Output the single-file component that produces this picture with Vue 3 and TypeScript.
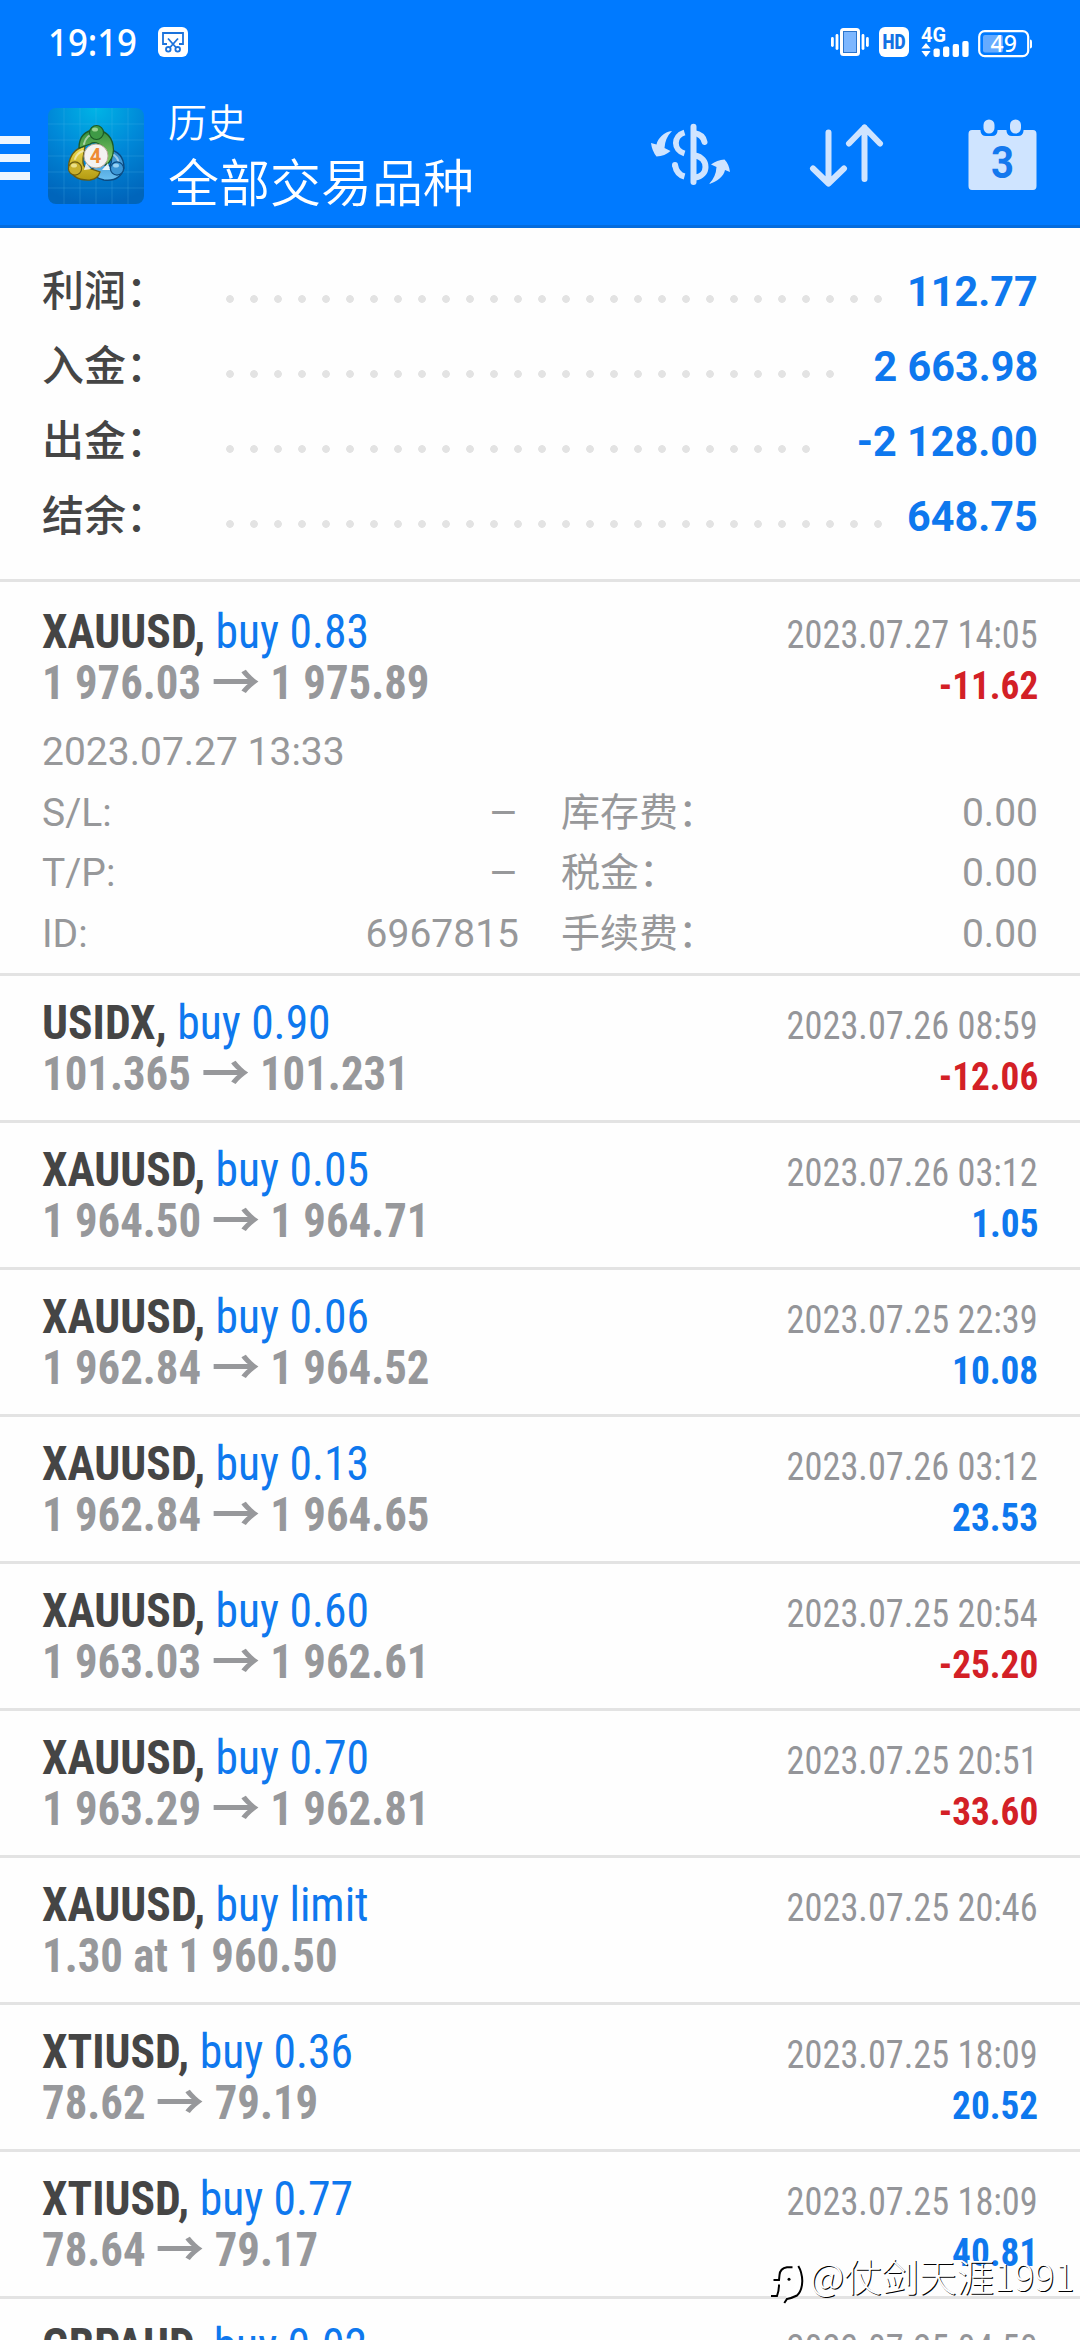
<script setup lang="ts">
interface SummaryRow { label: string; value: string; dots: number }
interface Deal { symbol: string; side: string; from: string; to?: string; time: string; profit?: string }

const summary: SummaryRow[] = [
  { label: '利润：', value: '112.77', dots: 28 },
  { label: '入金：', value: '2 663.98', dots: 26 },
  { label: '出金：', value: '-2 128.00', dots: 25 },
  { label: '结余：', value: '648.75', dots: 28 },
]

const details = [
  ['S/L:', '–', '库存费：', '0.00'],
  ['T/P:', '–', '税金：', '0.00'],
  ['ID:', '6967815', '手续费：', '0.00'],
]

const deals: Deal[] = [
  { symbol: 'XAUUSD', side: 'buy 0.83', from: '1 976.03', to: '1 975.89', time: '2023.07.27 14:05', profit: '-11.62' },
  { symbol: 'USIDX', side: 'buy 0.90', from: '101.365', to: '101.231', time: '2023.07.26 08:59', profit: '-12.06' },
  { symbol: 'XAUUSD', side: 'buy 0.05', from: '1 964.50', to: '1 964.71', time: '2023.07.26 03:12', profit: '1.05' },
  { symbol: 'XAUUSD', side: 'buy 0.06', from: '1 962.84', to: '1 964.52', time: '2023.07.25 22:39', profit: '10.08' },
  { symbol: 'XAUUSD', side: 'buy 0.13', from: '1 962.84', to: '1 964.65', time: '2023.07.26 03:12', profit: '23.53' },
  { symbol: 'XAUUSD', side: 'buy 0.60', from: '1 963.03', to: '1 962.61', time: '2023.07.25 20:54', profit: '-25.20' },
  { symbol: 'XAUUSD', side: 'buy 0.70', from: '1 963.29', to: '1 962.81', time: '2023.07.25 20:51', profit: '-33.60' },
  { symbol: 'XAUUSD', side: 'buy limit', from: '1.30 at 1 960.50', time: '2023.07.25 20:46' },
  { symbol: 'XTIUSD', side: 'buy 0.36', from: '78.62', to: '79.19', time: '2023.07.25 18:09', profit: '20.52' },
  { symbol: 'XTIUSD', side: 'buy 0.77', from: '78.64', to: '79.17', time: '2023.07.25 18:09', profit: '40.81' },
  { symbol: 'GBPAUD', side: 'buy 0.02', from: '', time: '2023.07.25 04:50' },
]
</script>

<template>
  <div class="screen">
    <header class="top">
      <div class="status">
        <span class="clock">19:19</span>
        <svg class="snip" width="30" height="30" viewBox="0 0 30 30">
          <rect width="30" height="30" rx="6" fill="#fff" />
          <g fill="none" stroke="#1a72dc" stroke-width="1.8">
            <path d="M9 17H5V6H25V17H21" />
            <path d="M10 11.5L18.5 21M20 11.5L11.5 21" />
            <circle cx="10.3" cy="22.3" r="2.3" />
            <circle cx="19.7" cy="22.3" r="2.3" />
          </g>
        </svg>
        <span class="spacer" />
        <svg width="38" height="30" viewBox="0 0 38 30">
          <g fill="#fff">
            <rect x="0" y="10" width="2.8" height="10" rx="1.4" />
            <rect x="4.6" y="7" width="2.8" height="16" rx="1.4" />
            <rect x="30.6" y="7" width="2.8" height="16" rx="1.4" />
            <rect x="35" y="10" width="2.8" height="10" rx="1.4" />
          </g>
          <rect x="10.5" y="2.5" width="17" height="25" rx="2" fill="#7db7ff" stroke="#fff" stroke-width="3" />
          <rect x="12.5" y="4.5" width="13" height="21" fill="none" stroke="#2b74cc" stroke-width="1" />
        </svg>
        <svg class="hd" width="30" height="30" viewBox="0 0 30 30">
          <rect width="30" height="30" rx="6" fill="#fff" />
          <text x="3.5" y="21.9" class="hdtxt" textLength="23" lengthAdjust="spacingAndGlyphs">HD</text>
        </svg>
        <svg class="sig" width="48" height="30" viewBox="0 0 48 30">
          <text x="0" y="14.5" class="g4" textLength="25" lengthAdjust="spacingAndGlyphs">4G</text>
          <g fill="#fff">
            <path d="M5 16L9.6 21.4H0.4ZM5 30L0.4 24H9.6Z" />
            <rect x="12.5" y="21.5" width="6.3" height="8.5" rx="2" />
            <rect x="22" y="19.5" width="6.3" height="10.5" rx="2" />
            <rect x="31.7" y="17" width="6.3" height="13" rx="2" />
            <rect x="41.3" y="14" width="6.3" height="16" rx="2" />
          </g>
        </svg>
        <svg class="batt" width="55" height="28" viewBox="0 0 55 28">
          <rect x="1.2" y="1.2" width="49" height="25" rx="5.5" fill="none" stroke="#fff" stroke-width="2.2" />
          <rect x="5" y="5" width="20" height="17.5" rx="2" fill="#66abff" />
          <path d="M52 9.5q2 0 2 2v5q0 2-2 2z" fill="#fff" />
          <text x="25.7" y="22" text-anchor="middle" class="pct">49</text>
        </svg>
      </div>
      <div class="bar">
        <div class="menu"><i /><i /><i /></div>
        <svg class="logo" width="96" height="96" viewBox="0 0 96 96">
          <defs>
            <radialGradient id="sky" cx=".5" cy="0" r="1"><stop offset="0" stop-color="#00b4e6" /><stop offset=".5" stop-color="#0088d8" /><stop offset="1" stop-color="#0065bb" /></radialGradient>
            <linearGradient id="gr" x2="0" y2="1"><stop offset="0" stop-color="#2f8c3c" /><stop offset="1" stop-color="#8fd06a" /></linearGradient>
            <linearGradient id="ye" x2="0" y2="1"><stop offset="0" stop-color="#f0dc50" /><stop offset="1" stop-color="#b39a10" /></linearGradient>
            <linearGradient id="bl" x2="0" y2="1"><stop offset="0" stop-color="#2e86c8" /><stop offset="1" stop-color="#6cc0f0" /></linearGradient>
          </defs>
          <rect width="96" height="96" rx="8" fill="url(#sky)" />
          <path d="M16 0V96M32 0V96M48 0V96M64 0V96M80 0V96M0 16H96M0 32H96M0 48H96M0 64H96M0 80H96" stroke="#5cc4f0" stroke-opacity=".22" stroke-width="1" />
          <path d="M60 41Q76 44 76 60Q72 74 56 72Q46 70 42 62L52 56L62 58Q66 50 60 41Z" fill="url(#bl)" stroke="#0b4a80" stroke-width="1.3" />
          <path d="M37 38Q22 42 20.5 58Q24 73 42 72Q50 71 52 64L40 60Q34 60 35 50Z" fill="url(#ye)" stroke="#6a5c10" stroke-width="1.3" />
          <path d="M31 40Q31 23 48 21.5Q65 24 65.5 42Q65 52 58 57L56 40Q48 32 42 36Z" fill="url(#gr)" stroke="#1c5a28" stroke-width="1.3" />
          <path d="M36 36Q38 27 46 26M27 51Q29 45 35 43M66 47Q71 51 71 57" fill="none" stroke="#fff" stroke-opacity=".5" stroke-width="2" stroke-linecap="round" />
          <path d="M36 62L38 55L43 61ZM54 62L60 55L62 62Z" fill="#fff" opacity=".85" />
          <circle cx="48.5" cy="24.5" r="7" fill="#3f9a46" stroke="#1c5a28" stroke-width="1.2" />
          <circle cx="27" cy="60.5" r="6.6" fill="#c9b02c" stroke="#6a5c10" stroke-width="1.2" />
          <circle cx="69" cy="60.5" r="6.6" fill="#3b96d6" stroke="#0b4a80" stroke-width="1.2" />
          <ellipse cx="47" cy="21.5" rx="3" ry="2" fill="#b4e0a4" opacity=".8" />
          <ellipse cx="26" cy="57.5" rx="3" ry="2" fill="#f4eca0" opacity=".8" />
          <ellipse cx="68" cy="57.5" rx="3" ry="2" fill="#b0e0fa" opacity=".8" />
          <circle cx="48" cy="48" r="12" fill="#f4f2f2" stroke="#b9a996" stroke-width="1" />
          <text x="47.5" y="55" text-anchor="middle" class="four">4</text>
        </svg>
        <div class="titles">
          <div class="t1">历史</div>
          <div class="t2">全部交易品种</div>
        </div>
        <svg class="usd" width="80" height="64" viewBox="0 0 80 64">
          <g fill="none" stroke="#cfe4ff">
            <path d="M42.5 4.7V60" stroke-width="6" stroke-linecap="round" />
            <path d="M33.5 10.5C22 14 22 28 33.5 31.5" stroke-width="5.8" />
            <path d="M43 11C49 12 52.5 14.5 53.5 20" stroke-width="6" stroke-linecap="round" />
            <path d="M44 33.5C58 36 58 54 44 55.5" stroke-width="6" />
            <path d="M24 43C25 49 28 53 33.5 54.5" stroke-width="6" />
          </g>
          <circle cx="24" cy="43" r="3" fill="#cfe4ff" />
          <path d="M21 9C13 10 7 16 5.5 22.5L0 21Q1 29 5.500 34.5Q14 34 19.500 29L13.500 26Q14 16 21 9Z" fill="#cfe4ff" />
          <path d="M58 62C66 60 73 54 74 48L79 50Q78 42 73.5 37.5Q66 38 60 42.5L65.5 45Q65 55 58 62Z" fill="#cfe4ff" />
        </svg>
        <svg class="sort" width="76" height="66" viewBox="0 0 76 66">
          <path d="M19.5 10.5V61M4 46.5L19.5 61.5L35 46.5M55.5 57V5.5M40 21.5L55.5 5.5L71 21.5" fill="none" stroke="#cfe4ff" stroke-width="6" stroke-linecap="round" stroke-linejoin="round" />
        </svg>
        <svg class="cal" width="70" height="72" viewBox="0 0 70 72">
          <path d="M4 11H12.5V12Q13 17 18 17H24Q29 17 29.5 12V11H38.5V12Q39 17 44 17H50Q55 17 55.5 12V11H65Q68.5 11 68.5 15V67Q68.5 71 65 71H4Q.5 71 .5 67V15Q.5 11 4 11Z" fill="#cfe4ff" />
          <rect x="15.5" y=".5" width="11" height="14" rx="5.5" fill="#cfe4ff" />
          <rect x="42" y=".5" width="11" height="14" rx="5.5" fill="#cfe4ff" />
          <text x="23" y="59" class="three" textLength="23" lengthAdjust="spacingAndGlyphs">3</text>
        </svg>
      </div>
    </header>

    <section class="summary">
      <div v-for="s in summary" :key="s.label" class="srow">
        <span class="slabel">{{ s.label }}</span>
        <span class="dots" :style="{ width: s.dots * 24 + 'px' }" />
        <span class="sval">{{ s.value }}</span>
      </div>
    </section>

    <section class="list">
      <article v-for="(d, i) in deals" :key="i" class="deal" :class="{ open: i === 0 }">
        <div class="line">
          <span class="name"><b>{{ d.symbol }},</b> <span class="side">{{ d.side }}</span></span>
          <span class="time">{{ d.time }}</span>
        </div>
        <div v-if="d.from" class="line">
          <span class="price">{{ d.from }}<template v-if="d.to">{{ ' ' }}<span class="arr">→</span> {{ d.to }}</template></span>
          <span v-if="d.profit" class="profit" :class="{ neg: d.profit.startsWith('-') }">{{ d.profit }}</span>
        </div>
        <div v-if="i === 0" class="details">
          <div class="drow">2023.07.27 13:33</div>
          <div v-for="r in details" :key="r[0]" class="drow">
            <span class="half"><span>{{ r[0] }}</span><span :class="{ dash: r[1] === '–' }">{{ r[1] }}</span></span>
            <span class="half"><span>{{ r[2] }}</span><span>{{ r[3] }}</span></span>
          </div>
        </div>
      </article>
    </section>

    <div class="mark">
      <svg width="38" height="46" viewBox="0 0 38 46">
        <path d="M4 34Q8 30 9 22M12 18Q13 9 22 9Q31 10 30.5 20Q30 32 18 35" fill="none" stroke="#fff" stroke-width="6" />
        <path d="M24.5 7.3H19Q12 8.5 11.5 15L11 20H5.5M11 24.5Q11 31 9 36H3M30.3 6Q34 12 34.3 21Q34 31 29 35.5Q24 38 19 39L16.3 43" fill="none" stroke="#000" stroke-width="2" />
        <circle cx="21" cy="19.3" r="1.5" fill="#000" />
      </svg>
      <span>@仗剑天涯1991</span>
    </div>
  </div>
</template>

<style>
body { background: #fff; }
</style>

<style scoped>
.screen { position: relative; width: 1080px; height: 2340px; overflow: hidden; background: #fefefe; font-family: Roboto, "Noto Sans CJK SC", sans-serif; color: #454545; }
.top { box-sizing: border-box; height: 228px; background: #007aff; border-bottom: 3px solid #046cdd; }
.status { display: flex; height: 84px; padding: 0 47px 0 48px; align-items: center; box-sizing: border-box; color: #fff; }
.clock { font: 500 38px/84px "Noto Sans", sans-serif; width: 90px; transform: scaleX(.915); transform-origin: left; margin-top: -2px; }
.snip { margin-left: 20px; }
.spacer { flex: 1; }
.hd { margin-left: 10px; }
.sig { margin-left: 12px; }
.batt { margin-left: 9px; margin-top: 3px; }
.hdtxt { font: 900 20px Roboto, sans-serif; fill: #1272e4; }
.g4 { font: 700 20px Roboto, sans-serif; fill: #fff; }
.pct { font: 500 23px "Noto Sans", sans-serif; fill: #fff; }
.bar { display: flex; height: 141px; align-items: flex-start; }
.menu { width: 30px; padding-top: 52px; display: flex; flex-direction: column; gap: 10px; }
.menu i { height: 8px; background: #eef6ff; }
.logo { margin: 24px 0 0 18px; }
.four { font: 700 20px Roboto, sans-serif; fill: #ee8a35; }
.titles { margin-left: 24px; width: 483px; padding-top: 12px; color: #fff; font-weight: 350; }
.t1 { font-size: 39px; line-height: 56px; }
.t2 { font-size: 51px; line-height: 66px; }
.usd { margin-top: 38px; }
.sort { margin: 38px 0 0 78px; }
.cal { margin: 35px 0 0 83px; }
.three { font: 700 44px Roboto, sans-serif; fill: #1478ee; }
.summary { height: 351px; box-sizing: border-box; padding: 26px 42px 0 42px; }
.srow { display: flex; height: 75px; align-items: center; font-size: 42px; line-height: 75px; }
.slabel { width: 184px; font-weight: 500; }
.dots { height: 8px; margin-top: 15px; background: radial-gradient(circle at 4px 4px, #e3e3e3 3.5px, transparent 4.2px) 0 0 / 24px 8px repeat-x; }
.sval { margin-left: auto; font-weight: 700; color: #0e78ee; transform: scaleX(.985); transform-origin: right; }
.deal { border-top: 3px solid #e3e3e3; padding: 21px 42px 0 42px; box-sizing: content-box; height: 123px; }
.deal.open { padding-top: 24px; height: 367px; }
.line { display: flex; justify-content: space-between; height: 51px; line-height: 51px; white-space: nowrap; align-items: baseline; font-stretch: 75%; font-family: "Roboto Condensed", Roboto, "Noto Sans CJK SC", sans-serif; }
.name { font-size: 48px; transform: scaleX(.949); transform-origin: left; }
.name b { font-weight: 700; }
.side { color: #0e78ee; }
.time { font-size: 39px; color: #949599; transform: scaleX(.931); transform-origin: right; }
.price { font-size: 48px; font-weight: 700; color: #97989b; transform: scaleX(.933); transform-origin: left; }
.arr { display: inline-block; width: 52px; line-height: 0; font-family: "Noto Sans CJK SC", sans-serif; transform: scaleX(1.08); transform-origin: left; }
.profit { font-size: 39px; font-weight: 700; color: #0e78ee; transform: scaleX(.955); transform-origin: right; }
.profit.neg { color: #d32026; }
.details { margin-top: 14px; color: #97989a; font-size: 39px; }
.drow { display: flex; gap: 42px; height: 60.5px; line-height: 60.5px; }
.half { flex: 1; display: flex; justify-content: space-between; }
.dash { transform: scaleX(1.18); transform-origin: right; }
.mark { position: absolute; left: 768px; top: 2248px; display: flex; align-items: center; height: 54px; font: 300 37.5px/54px "Noto Sans CJK SC", sans-serif; color: #fff; text-shadow: 1px 1px 0 #000; white-space: nowrap; }
.mark svg { margin-top: 15px; }
.mark span { margin-left: 4px; }
</style>
